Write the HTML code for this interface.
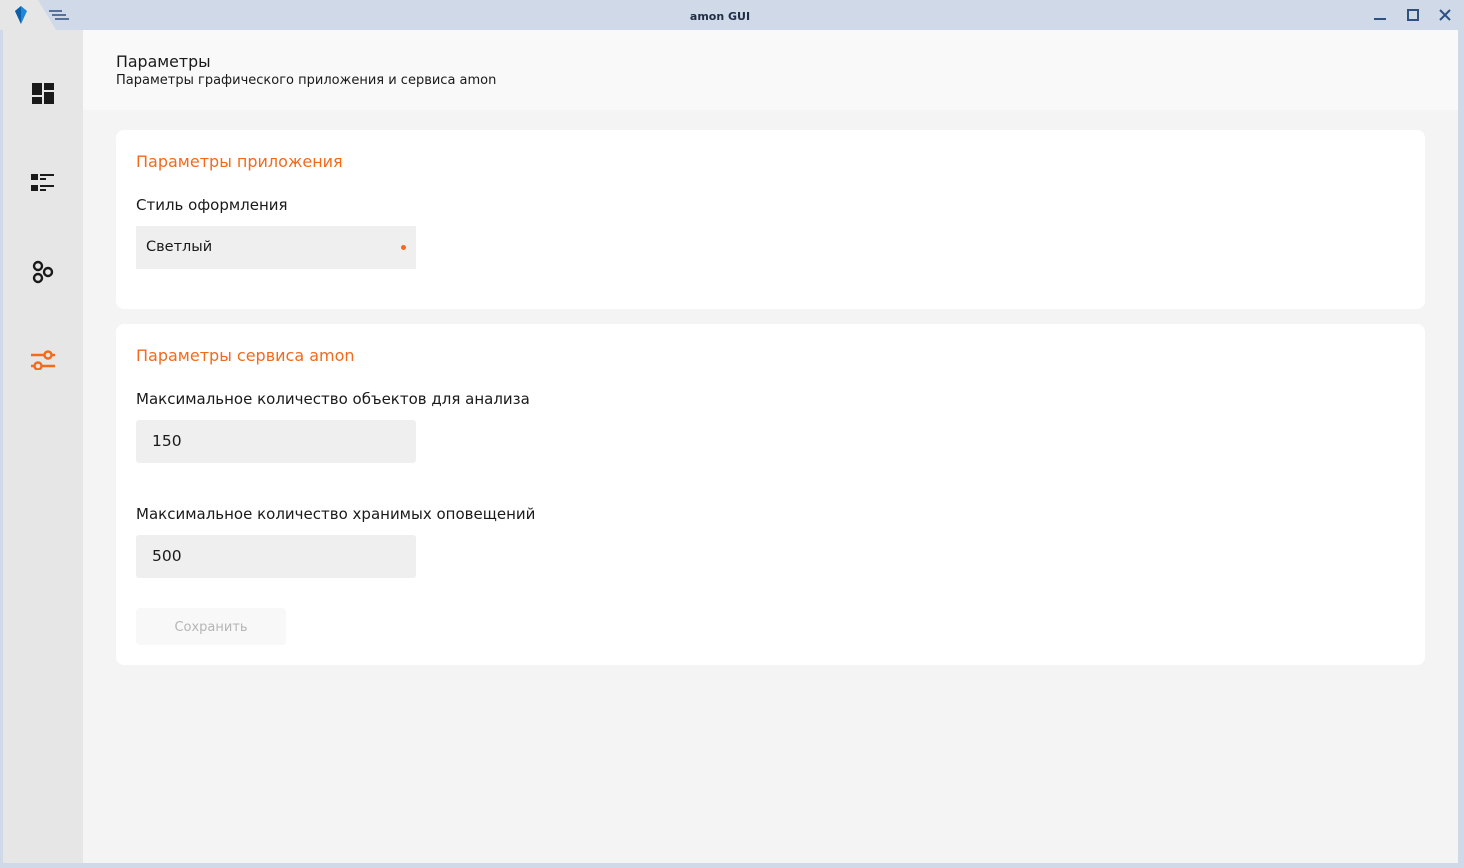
<!DOCTYPE html>
<html><head><meta charset="utf-8"><style>
*{margin:0;padding:0;box-sizing:border-box}
body{width:1464px;height:868px;background:#cfd9e8;font-family:"DejaVu Sans","Liberation Sans",sans-serif;position:relative;overflow:hidden;color:#1a1a1a}
.title{position:absolute;left:0;top:0;width:1464px;height:30px;background:#cfd9e8}
.tab{position:absolute;left:0;top:0;width:56px;height:30px;background:#e6e6e6;clip-path:polygon(0 0,38px 0,56px 30px,0 30px)}
.tt{position:absolute;left:0;width:1440px;top:10px;text-align:center;font-size:11px;font-weight:bold;color:#1f2d45}
.side{position:absolute;left:3px;top:30px;width:80px;height:833px;background:#e6e6e6}
.main{position:absolute;left:83px;top:30px;width:1375px;height:833px;background:#f4f4f4}
.hdr{height:80px;background:#f9f9f9;padding:22px 33px 0}
.hdr h1{font-size:15.8px;font-weight:normal;line-height:19px}
.hdr p{font-size:13px;margin-top:2px}
.card{position:absolute;left:33px;width:1309px;background:#fff;border-radius:8px;padding:0 20px}
.ct{color:#f26a1b;font-size:16px;position:absolute;left:20px}
.lbl{font-size:15px;position:absolute;left:20px}
.inp{position:absolute;left:20px;width:280px;height:43px;background:#efefef;border-radius:3px;font-size:15.5px;padding:12px 16px}
</style></head><body>
<div class="title"><div class="tab"></div>
<svg style="position:absolute;left:13px;top:5px" width="16" height="20" viewBox="0 0 16 20"><path d="M8 1L14 6L8 19L2 6Z" fill="#1e88d8"/><path d="M8 1L2 6L8 19Z" fill="#0d5fa8"/></svg>
<svg style="position:absolute;left:48px;top:10px" width="22" height="11"><path d="M1 1H14M4 5H18M7 9H21" stroke="#2e5182" stroke-width="1.6"/></svg>
<div class="tt">amon GUI</div>
<svg style="position:absolute;left:1372px;top:8px" width="80" height="16"><path d="M2 11H14" stroke="#2e5182" stroke-width="2"/><rect x="36" y="2" width="10" height="10" fill="none" stroke="#2e5182" stroke-width="2"/><path d="M68 2L78 12M78 2L68 12" stroke="#2e5182" stroke-width="2"/></svg>
</div>
<div class="side">
<svg style="position:absolute;left:29px;top:53px" width="22" height="22"><rect x="0" y="0" width="10" height="12" fill="#1a1a1a"/><rect x="12" y="0" width="10" height="7" fill="#1a1a1a"/><rect x="0" y="14" width="10" height="7" fill="#1a1a1a"/><rect x="12" y="9" width="10" height="12" fill="#1a1a1a"/></svg>
<svg style="position:absolute;left:28px;top:144px" width="24" height="20"><rect x="0" y="0" width="7" height="6" fill="#1a1a1a"/><rect x="0" y="11" width="7" height="6" fill="#1a1a1a"/><path d="M9 1H23M9 5H15M9 12H23M9 16H15" stroke="#1a1a1a" stroke-width="2"/></svg>
<svg style="position:absolute;left:29px;top:230px" width="24" height="26"><g fill="none" stroke="#1a1a1a" stroke-width="2.4"><circle cx="6" cy="6" r="4"/><circle cx="6" cy="18" r="4"/><circle cx="16" cy="12" r="4"/></g></svg>
<svg style="position:absolute;left:28px;top:320px" width="26" height="20"><g fill="none" stroke="#f26a1b" stroke-width="2.4"><path d="M0 5H13M21 5H24M0 16H3M11 16H24"/><circle cx="17" cy="5" r="3.5"/><circle cx="7" cy="16" r="3.5"/></g></svg>
</div>
<div class="main">
<div class="hdr"><h1>Параметры</h1><p>Параметры графического приложения и сервиса amon</p></div>
<div class="card" style="top:100px;height:179px">
<div class="ct" style="top:22px">Параметры приложения</div>
<div class="lbl" style="top:66px">Стиль оформления</div>
<div class="inp" style="top:96px;font-size:14.5px;padding:13px 10px;border-radius:0">Светлый<span style="position:absolute;right:10px;top:19px;width:5px;height:5px;border-radius:3px;background:#f26a1b"></span></div>
</div>
<div class="card" style="top:294px;height:341px">
<div class="ct" style="top:22px">Параметры сервиса amon</div>
<div class="lbl" style="top:66px">Максимальное количество объектов для анализа</div>
<div class="inp" style="top:96px">150</div>
<div class="lbl" style="top:181px">Максимальное количество хранимых оповещений</div>
<div class="inp" style="top:211px">500</div>
<div style="position:absolute;left:20px;top:284px;width:150px;height:37px;background:#f8f8f8;border-radius:4px;color:#b5b5b5;font-size:13px;text-align:center;line-height:39px">Сохранить</div>
</div>
</div>
</body></html>
